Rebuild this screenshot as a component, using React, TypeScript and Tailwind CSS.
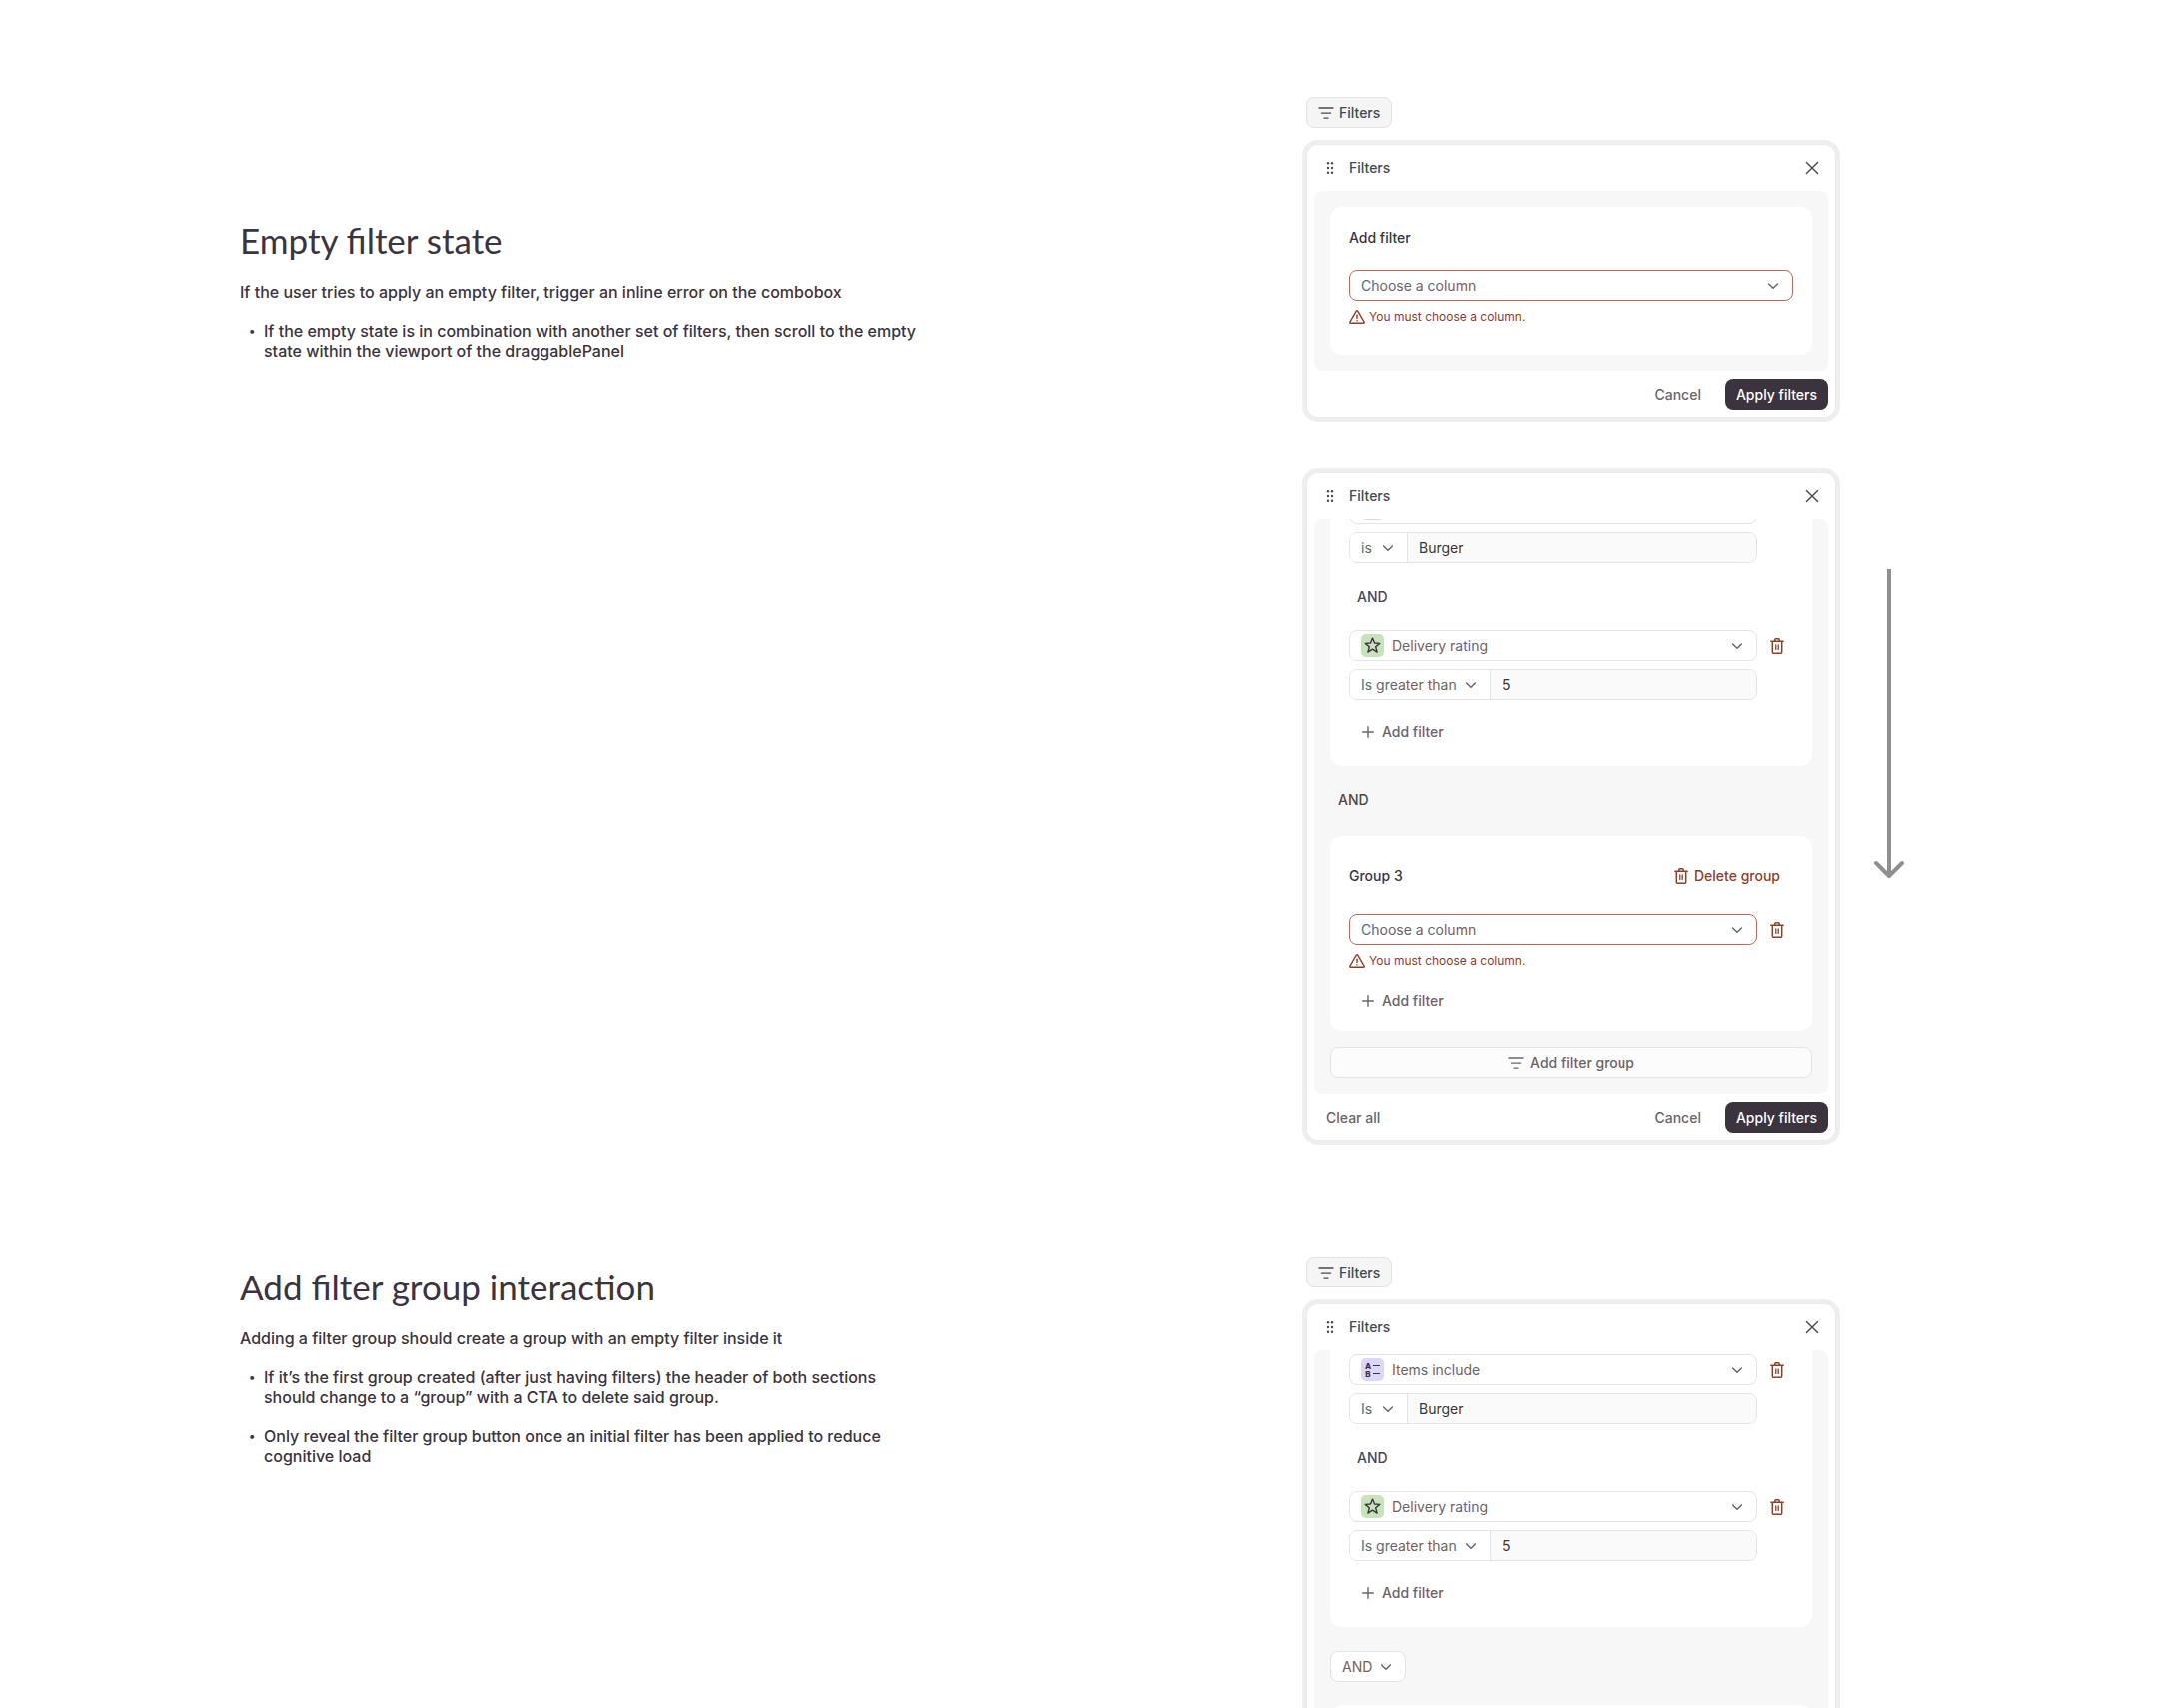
import type { ReactNode } from 'react';

function FilterIcon() {
  return (
    <svg viewBox="0 0 16 16" className="h-4 w-4 shrink-0" fill="none" stroke="currentColor" strokeWidth="1.4" strokeLinecap="round" aria-hidden="true">
      <path d="M1 3h14M3.4 8.1h9.2M6 13.1h4" />
    </svg>
  );
}

function ChevronIcon() {
  return (
    <svg viewBox="0 0 12 12" className="h-3 w-3 shrink-0" fill="none" stroke="currentColor" strokeWidth="1.5" strokeLinecap="round" strokeLinejoin="round" aria-hidden="true">
      <path d="M1.600 4l4.400 4.300L10.400 4" />
    </svg>
  );
}

function CloseIcon() {
  return (
    <svg viewBox="0 0 14 14" className="h-3.5 w-3.5" fill="none" stroke="currentColor" strokeWidth="1.4" strokeLinecap="round" aria-hidden="true">
      <path d="M1.400 1.400l11.200 11.200M12.600 1.400L1.400 12.600" />
    </svg>
  );
}

function PlusIcon() {
  return (
    <svg viewBox="0 0 12 12" className="h-3 w-3 shrink-0" fill="none" stroke="currentColor" strokeWidth="1.4" strokeLinecap="round" aria-hidden="true">
      <path d="M6 .7v10.600M.7 6h10.600" />
    </svg>
  );
}

function DragIcon() {
  return (
    <svg viewBox="0 0 8 14" className="h-3.5 w-2" fill="currentColor" aria-hidden="true">
      <circle cx="2" cy="2.2" r="1.2" />
      <circle cx="6" cy="2.2" r="1.2" />
      <circle cx="2" cy="7" r="1.2" />
      <circle cx="6" cy="7" r="1.2" />
      <circle cx="2" cy="11.8" r="1.2" />
      <circle cx="6" cy="11.8" r="1.2" />
    </svg>
  );
}

function TrashIcon() {
  return (
    <svg viewBox="0 0 14 16" className="h-4 w-3.5 shrink-0" fill="none" stroke="currentColor" strokeWidth="1.5" strokeLinecap="round" strokeLinejoin="round" aria-hidden="true">
      <path d="M.8 3.300h12.400M2.300 3.300v10.900c0 .6.400 1 1 1h7.400c.6 0 1-.4 1-1V3.300" />
      <path d="M4.800 3.100V1.700c0-.5.400-.9.900-.9h2.600c.5 0 .9.400.9.900v1.400" />
      <path d="M5.800 7v4.400M8.200 7v4.400" strokeWidth="1.3" />
    </svg>
  );
}

function WarningIcon() {
  return (
    <svg viewBox="0 0 16 14" className="h-3.5 w-4 shrink-0" fill="none" stroke="currentColor" strokeWidth="1.4" strokeLinecap="round" strokeLinejoin="round" aria-hidden="true">
      <path d="M7.300 1.200a.8.8 0 0 1 1.400 0l6.400 11a.7.7 0 0 1-.6 1.100h-13a.7.7 0 0 1-.6-1.100z" />
      <path d="M8 5.300v3.200" />
      <path d="M8 10.800v.1" />
    </svg>
  );
}

function StarTile() {
  return (
    <span className="flex h-[23px] w-[23px] items-center justify-center rounded-[5px] bg-[#c8e2bb] text-[#3b333d]">
      <svg viewBox="0 0 17 17" className="h-[17px] w-[17px]" fill="none" stroke="currentColor" strokeWidth="1.4" strokeLinejoin="round" aria-hidden="true">
        <path d="M8.500 1.100l2 4.900 5.300.4-4.100 3.400 1.400 5.300-4.600-2.900-4.600 2.900 1.400-5.300L1.200 6.400l5.300-.4z" />
      </svg>
    </span>
  );
}

function ListTile() {
  return (
    <span className="flex h-[23px] w-[23px] flex-col items-center justify-center rounded-[5px] bg-[#dcd7f7] text-[#3b333d]">
      <span className="flex items-center gap-0.5 text-[8px] leading-[8px] font-extrabold">A<i className="h-px w-[7px] bg-[#3b333d]" /></span>
      <span className="flex items-center gap-0.5 text-[8px] leading-[8px] font-extrabold">B<i className="h-px w-[7px] bg-[#3b333d]" /></span>
    </span>
  );
}

function SelectBox({ label, value, tile, tone = 'plain' }: { label: string; value: string; tile?: ReactNode; tone?: 'plain' | 'error' | 'bare' }) {
  const edge = {
    plain: 'rounded-lg border border-[#e4e3e5]',
    error: 'rounded-lg border border-[#c4665c]',
    bare: 'border-r border-[#e4e3e5]',
  }[tone];
  return (
    <div className="grid min-w-0 flex-1 items-center text-[#6a646c]">
      <select
        aria-label={label}
        aria-invalid={tone === 'error'}
        className={`col-start-1 row-start-1 w-full appearance-none bg-white text-sm ${tone === 'bare' ? 'h-[29px]' : 'h-[31px]'} ${tile ? 'pl-[42px]' : 'pl-[11px]'} ${edge}`}
      >
        <option>{value}</option>
      </select>
      {tile && <span className="pointer-events-none col-start-1 row-start-1 ml-3 justify-self-start">{tile}</span>}
      <span className="pointer-events-none col-start-1 row-start-1 mr-3.5 justify-self-end"><ChevronIcon /></span>
    </div>
  );
}

function TrashButton({ label }: { label: string }) {
  return (
    <button type="button" aria-label={label} className="flex h-[31px] w-9 shrink-0 items-center justify-center pl-1 text-[#8d4028]">
      <TrashIcon />
    </button>
  );
}

function ColumnRow({ value, tile, error }: { value: string; tile?: ReactNode; error?: boolean }) {
  return (
    <div className="flex">
      <SelectBox label="Column" value={value} tile={tile} tone={error ? 'error' : 'plain'} />
      <TrashButton label={`Delete filter ${value}`} />
    </div>
  );
}

function ConditionRow({ operator, value, wide }: { operator: string; value: string; wide?: boolean }) {
  return (
    <div className="mt-2 mr-9 flex overflow-hidden rounded-lg border border-[#e4e3e5]">
      <div className={`flex shrink-0 ${wide ? 'w-[141px]' : 'w-[58px]'}`}>
        <SelectBox label="Operator" value={operator} tone="bare" />
      </div>
      <input aria-label="Value" defaultValue={value} className="h-[29px] min-w-0 flex-1 bg-[#fafafa] px-[11px] text-sm text-[#3b333d]" />
    </div>
  );
}

function ErrorText() {
  return (
    <p role="alert" className="mt-2 flex h-4 items-center gap-1 text-xs text-[#8d4028]">
      <WarningIcon />
      You must choose a column.
    </p>
  );
}

function AddFilterButton() {
  return (
    <button type="button" className="mt-4 flex h-[31px] items-center gap-2 px-[13px] text-sm font-medium text-[#6a646c]">
      <PlusIcon />
      Add filter
    </button>
  );
}

function Joiner() {
  return <p className="my-[18px] flex h-[31px] shrink-0 items-center pl-2 text-sm font-medium text-[#4d464f]">AND</p>;
}

function FilterTrigger() {
  return (
    <button type="button" className="ml-1 flex h-[31px] w-fit items-center gap-[5px] rounded-lg border border-[#e2e1e3] bg-[#f5f5f5] px-[11px] text-sm font-medium text-[#4d464f]">
      <FilterIcon />
      Filters
    </button>
  );
}

function Panel({ children, clearable, footer = true }: { children: ReactNode; clearable?: boolean; footer?: boolean }) {
  return (
    <section aria-label="Filters" className="w-full max-w-[539px] rounded-2xl border-4 border-[#eeeeee] bg-white shadow-[inset_0_0_0_1px_#e9e9e9]">
      <header className="flex h-[47px] items-center pr-[17px] pl-5 text-[#4d464f]">
        <button type="button" aria-label="Move panel"><DragIcon /></button>
        <h2 className="ml-[15px] flex-1 text-sm font-medium">Filters</h2>
        <button type="button" aria-label="Close"><CloseIcon /></button>
      </header>
      {children}
      {footer && (
        <footer className="flex h-[47px] items-center justify-end gap-3 px-2 text-sm font-medium text-[#6a646c]">
          {clearable && <button type="button" className="mr-auto h-[31px] px-3">Clear all</button>}
          <button type="button" className="h-[31px] px-3">Cancel</button>
          <button type="button" className="h-[31px] rounded-lg bg-[#3b333d] px-[11px] text-white">Apply filters</button>
        </footer>
      )}
    </section>
  );
}

function RatingFilters() {
  return (
    <>
      <Joiner />
      <ColumnRow value="Delivery rating" tile={<StarTile />} />
      <ConditionRow operator="Is greater than" value="5" wide />
      <AddFilterButton />
    </>
  );
}

function Note({ children }: { children: ReactNode }) {
  return (
    <li className="flex">
      <span className="w-6 shrink-0 pl-[9px] text-xs leading-5" aria-hidden="true">•</span>
      <span>{children}</span>
    </li>
  );
}

export default function App() {
  return (
    <main className="h-screen overflow-hidden bg-white pt-[97px] pl-60 font-['Inter',sans-serif] text-[#3b333d]">
      <article className="grid grid-cols-[1063fr_861fr]">
        <div className="pt-[123px]">
          <h1 className="font-['Lato',sans-serif] text-[35px] leading-10">Empty filter state</h1>
          <p className="mt-[22px] text-base leading-5 font-medium">
            If the user tries to apply an empty filter, trigger an inline error on the combobox
          </p>
          <ul className="mt-[19px] max-w-[692px] space-y-[19px] text-base leading-5 font-medium">
            <Note>If the empty state is in combination with another set of filters, then scroll to the empty state within the viewport of the draggablePanel</Note>
          </ul>
        </div>
        <div>
          <FilterTrigger />
          <div className="mt-3">
            <Panel>
              <div className="mx-2 rounded-lg bg-[#f7f7f7] p-4">
                <div className="rounded-xl bg-white px-[19px] pt-[21px] pb-[30px]">
                  <h3 className="text-sm font-medium">Add filter</h3>
                  <div className="mt-[22px] flex">
                    <SelectBox label="Column" value="Choose a column" tone="error" />
                  </div>
                  <ErrorText />
                </div>
              </div>
            </Panel>
          </div>
          <div className="mt-[47px] flex gap-[34px]">
            <Panel clearable>
              <div className="mx-2 flex h-[575px] flex-col justify-end overflow-hidden rounded-lg bg-[#f7f7f7] px-4 pb-4">
                <div className="shrink-0 rounded-xl bg-white px-[19px] pt-6 pb-[19px]">
                  <ColumnRow value="Items include" tile={<ListTile />} />
                  <ConditionRow operator="is" value="Burger" />
                  <RatingFilters />
                </div>
                <div className="shrink-0 pb-[3px]">
                  <Joiner />
                </div>
                <div className="shrink-0 rounded-xl bg-white px-[19px] pt-6 pb-[15px]">
                  <div className="flex h-[31px] items-center justify-between">
                    <h3 className="text-sm font-medium">Group 3</h3>
                    <button type="button" className="flex h-[31px] items-center gap-1.5 pr-[13px] text-sm font-medium text-[#8d4028]">
                      <TrashIcon />
                      Delete group
                    </button>
                  </div>
                  <div className="mt-[23px]">
                    <ColumnRow value="Choose a column" error />
                  </div>
                  <ErrorText />
                  <AddFilterButton />
                </div>
                <button type="button" className="mt-4 flex h-[31px] shrink-0 items-center justify-center gap-1.5 rounded-lg border border-[#e4e3e5] bg-[#fcfcfc] text-sm font-medium text-[#6a646c]">
                  <FilterIcon />
                  Add filter group
                </button>
              </div>
            </Panel>
            <svg viewBox="0 0 30 312" className="mt-[100px] h-[312px] w-[30px] shrink-0" fill="none" stroke="#8f8f8f" strokeWidth="4" strokeLinejoin="round" role="img" aria-label="Scroll down">
              <path d="M15 1v306" />
              <path d="M2 295l13 13 13-13" strokeLinecap="round" />
            </svg>
          </div>
        </div>
      </article>

      <article className="mt-28 grid grid-cols-[1063fr_861fr]">
        <div className="pt-[10px]">
          <h1 className="font-['Lato',sans-serif] text-[35px] leading-10">Add filter group interaction</h1>
          <p className="mt-[22px] text-base leading-5 font-medium">
            Adding a filter group should create a group with an empty filter inside it
          </p>
          <ul className="mt-[19px] max-w-[692px] space-y-[19px] text-base leading-5 font-medium">
            <Note>If it’s the first group created (after just having filters) the header of both sections should change to a “group” with a CTA to delete said group.</Note>
            <Note>Only reveal the filter group button once an initial filter has been applied to reduce cognitive load</Note>
          </ul>
        </div>
        <div>
          <FilterTrigger />
          <div className="mt-3">
            <Panel footer={false}>
              <div className="mx-2 rounded-lg bg-[#f7f7f7] px-4 pb-4">
                <div className="rounded-b-xl bg-white px-[19px] pt-1 pb-[19px]">
                  <ColumnRow value="Items include" tile={<ListTile />} />
                  <ConditionRow operator="Is" value="Burger" />
                  <RatingFilters />
                </div>
                <div className="mt-6 mb-[23px] flex w-[76px]">
                  <SelectBox label="Group operator" value="AND" />
                </div>
                <div className="h-10 rounded-xl bg-white" />
              </div>
            </Panel>
          </div>
        </div>
      </article>
    </main>
  );
}
